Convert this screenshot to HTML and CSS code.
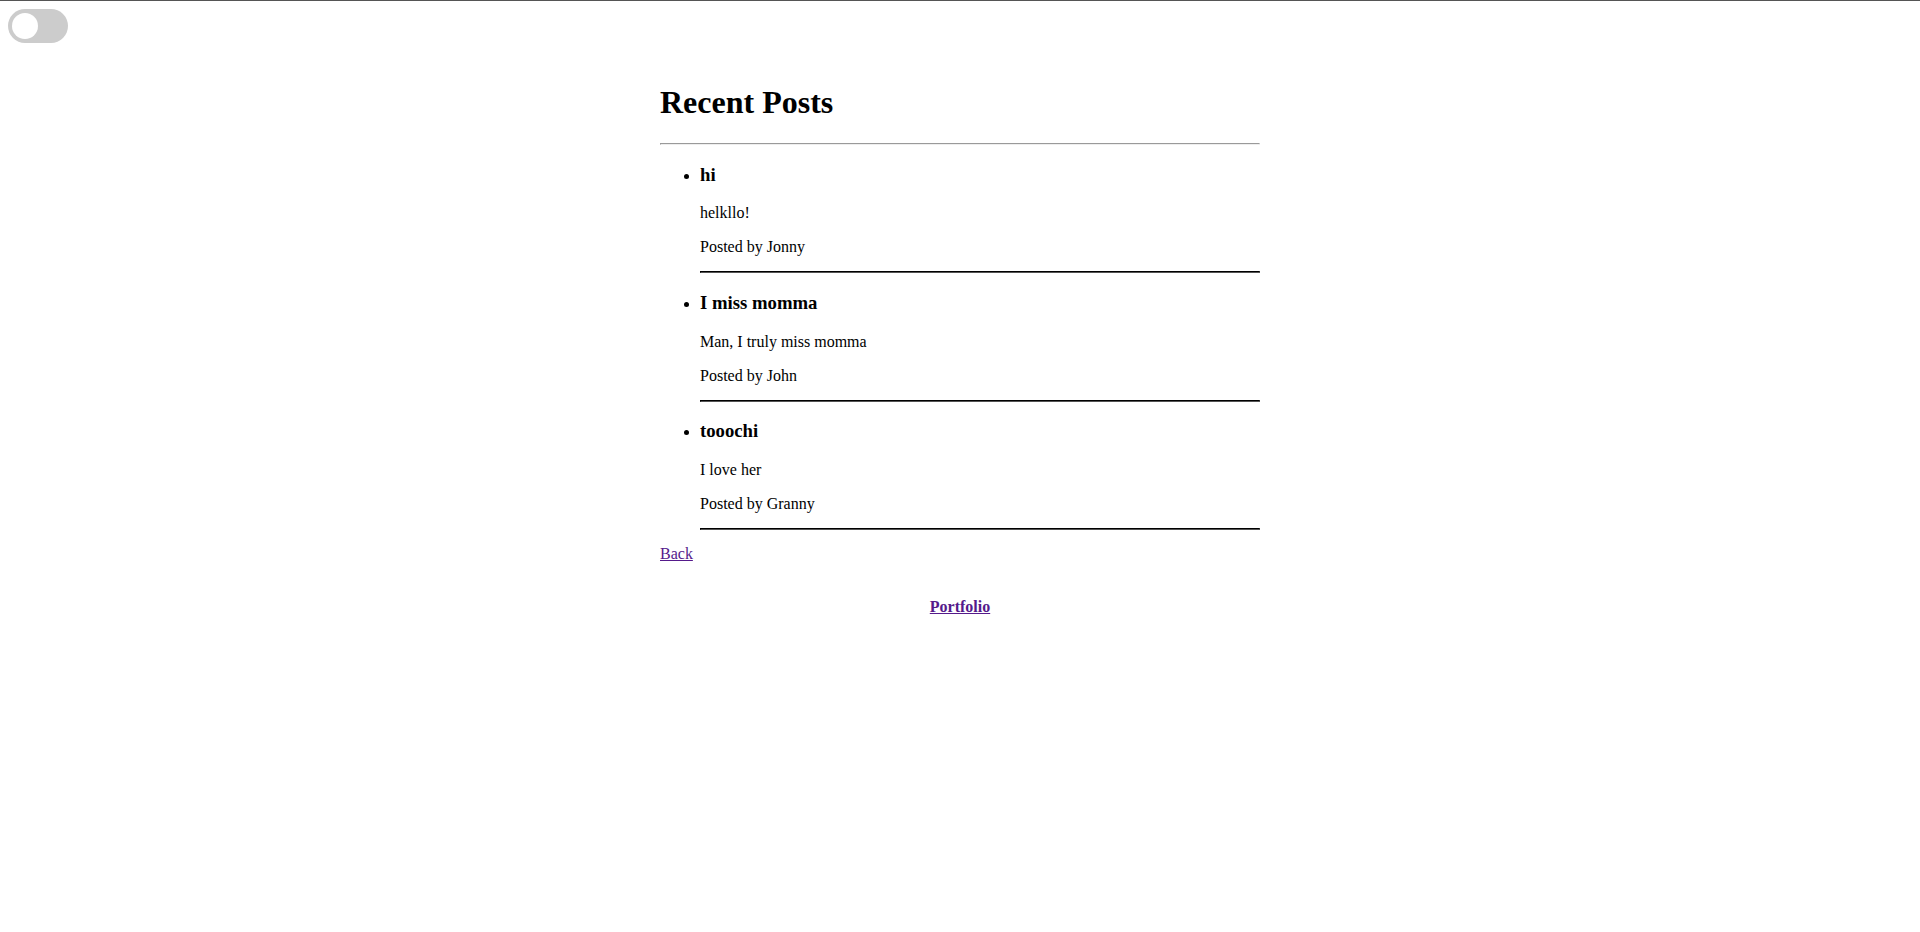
FILE: index.html
```html
<!DOCTYPE html>
<html lang="en">
<head>
<meta charset="utf-8">
<title>Recent Posts</title>
<link rel="stylesheet" href="styles.css">
</head>
<body>
<div class="topbar">
  <label class="switch"><span class="knob"></span></label>
</div>
<main class="main">
  <h1 class="title">Recent Posts</h1>
  <hr class="rule">
  <ul class="posts">
    <li class="post">
      <h3 class="post-title">hi</h3>
      <p class="post-body">helkllo!</p>
      <p class="post-meta">Posted by Jonny</p>
      <hr class="post-rule">
    </li>
    <li class="post">
      <h3 class="post-title">I miss momma</h3>
      <p class="post-body">Man, I truly miss momma</p>
      <p class="post-meta">Posted by John</p>
      <hr class="post-rule">
    </li>
    <li class="post">
      <h3 class="post-title">tooochi</h3>
      <p class="post-body">I love her</p>
      <p class="post-meta">Posted by Granny</p>
      <hr class="post-rule">
    </li>
  </ul>
  <div class="back-row"><a class="link" href="#">Back</a></div>
</main>
<footer class="footer">
  <a class="link footer-link" href="#">Portfolio</a>
</footer>
</body>
</html>
```
FILE: styles.css
```css
html {
  border-top: 1px solid #555555;
}

body {
  margin: 8px;
  font-family: "Liberation Serif", "Times New Roman", serif;
  font-size: 16px;
  color: #000;
  background: #fff;
}

.topbar {
  display: flex;
}

.switch {
  display: flex;
  align-items: center;
  box-sizing: border-box;
  width: 60px;
  height: 34px;
  padding: 4px;
  background: #cccccc;
  border-radius: 34px;
}

.knob {
  width: 26px;
  height: 26px;
  border-radius: 50%;
  background: #ffffff;
}

.main {
  width: 600px;
  margin: 0 auto;
  padding-top: 20px;
}

.title {
  font-size: 32px;
  font-weight: bold;
  margin: 21.44px 0;
}

.rule {
  margin: 8px 0;
  border: 1px inset;
  color: gray;
}

.posts {
  margin: 16px 0;
  padding-left: 40px;
}

.post-title {
  font-size: 18.72px;
  margin: 18.72px 0;
}

.post-body {
  margin: 16px 0;
}

.post-meta {
  margin: 16px 0 15px;
}

.post-rule {
  margin: 8px 0;
  border: 1px inset #000;
}

.back-row {
  margin-top: -1px;
}

.link {
  color: #551a8b;
  text-decoration: underline;
}

.footer {
  text-align: center;
  margin-top: 35px;
}

.footer-link {
  font-weight: bold;
}
```
